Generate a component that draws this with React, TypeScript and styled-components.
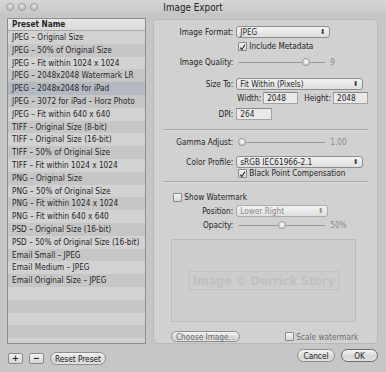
import * as React from "react";
import styled, { createGlobalStyle } from "styled-components";

const presets = [
  "JPEG – Original Size",
  "JPEG – 50% of Original Size",
  "JPEG – Fit within 1024 x 1024",
  "JPEG – 2048x2048 Watermark LR",
  "JPEG – 2048x2048 for iPad",
  "JPEG – 3072 for iPad – Horz Photo",
  "JPEG – Fit within 640 x 640",
  "TIFF – Original Size (8-bit)",
  "TIFF – Original Size (16-bit)",
  "TIFF – 50% of Original Size",
  "TIFF – Fit within 1024 x 1024",
  "PNG – Original Size",
  "PNG – 50% of Original Size",
  "PNG – Fit within 1024 x 1024",
  "PNG – Fit within 640 x 640",
  "PSD – Original Size (16-bit)",
  "PSD – 50% of Original Size (16-bit)",
  "Email Small – JPEG",
  "Email Medium – JPEG",
  "Email Original Size – JPEG",
];

const SELECTED = 4;
const STRIPES = 25;

const App: React.FC = () => {
  const rows = React.useMemo(
    () =>
      Array.from({ length: STRIPES }, (_, i) => (
        <ListRow key={i} $odd={i % 2 === 1} $selected={i === SELECTED}>
          {presets[i] ?? ""}
        </ListRow>
      )),
    []
  );

  return (
    <>
      <GlobalStyle />
      <Window>
        <TitleBar>
          <Lights>
            <Light />
            <Light />
            <Light />
          </Lights>
          <Title>Image Export</Title>
          <span />
        </TitleBar>
        <Body>
          <LeftColumn>
            <List>
              <ListHeader>Preset Name</ListHeader>
              {rows}
            </List>
            <ButtonRow>
              <SquareButton>+</SquareButton>
              <SquareButton>−</SquareButton>
              <PillButton $width={56}>Reset Preset</PillButton>
            </ButtonRow>
          </LeftColumn>
          <RightColumn>
            <Panel>
              <FormRow $top={6} $height={12}>
                <Label>Image Format:</Label>
                <Select $width={94}>JPEG</Select>
              </FormRow>
              <FormRow $top={3} $height={10}>
                <span />
                <Check checked>Include Metadata</Check>
              </FormRow>
              <FormRow $top={6} $height={10}>
                <Label>Image Quality:</Label>
                <Slider value={0.78} text="9" />
              </FormRow>
              <FormRow $top={11} $height={12}>
                <Label>Size To:</Label>
                <Select $width={127}>Fit Within (Pixels)</Select>
              </FormRow>
              <FormRow $top={2} $height={12}>
                <span />
                <SizeFields>
                  <Label>Width:</Label>
                  <Field $width={35}>2048</Field>
                  <Label>Height:</Label>
                  <Field $width={35}>2048</Field>
                </SizeFields>
              </FormRow>
              <FormRow $top={4} $height={12}>
                <Label>DPI:</Label>
                <Field $width={36}>264</Field>
              </FormRow>
              <Separator $top={9} />
              <FormRow $top={6} $height={10}>
                <Label>Gamma Adjust:</Label>
                <Slider value={0.04} text="1.00" />
              </FormRow>
              <FormRow $top={9} $height={12}>
                <Label>Color Profile:</Label>
                <Select $width={127}>sRGB IEC61966-2.1</Select>
              </FormRow>
              <FormRow $top={0} $height={10}>
                <span />
                <Check checked>Black Point Compensation</Check>
              </FormRow>
              <Separator $top={3} />
              <WatermarkToggle>
                <Check>Show Watermark</Check>
              </WatermarkToggle>
              <FormRow $top={3} $height={12}>
                <Label>Position:</Label>
                <Select $width={92} $disabled>
                  Lower Right
                </Select>
              </FormRow>
              <FormRow $top={3} $height={10}>
                <Label>Opacity:</Label>
                <Slider value={0.5} text="50%" />
              </FormRow>
              <PreviewBox>
                <WatermarkText>Image © Derrick Story</WatermarkText>
              </PreviewBox>
              <PanelFooter>
                <PillButton $width={69} $disabled>
                  Choose Image...
                </PillButton>
                <Check $disabled>Scale watermark</Check>
              </PanelFooter>
            </Panel>
            <DialogButtons>
              <PillButton $width={38}>Cancel</PillButton>
              <PillButton $width={37} $default>
                OK
              </PillButton>
            </DialogButtons>
          </RightColumn>
        </Body>
      </Window>
    </>
  );
};

const Check: React.FC<{
  checked?: boolean;
  $disabled?: boolean;
  children: React.ReactNode;
}> = ({ checked, $disabled, children }) => (
  <CheckWrap $disabled={$disabled}>
    <CheckBox>
      {checked && (
        <svg width="9" height="9" viewBox="0 0 9 9">
          <path
            d="M1.6 4.6 L3.6 7.2 L7.8 0.6"
            fill="none"
            stroke="#2a2a2a"
            strokeWidth="1.4"
          />
        </svg>
      )}
    </CheckBox>
    {children}
  </CheckWrap>
);

const Slider: React.FC<{ value: number; text: string }> = ({ value, text }) => (
  <SliderWrap>
    <Track>
      <Knob style={{ left: `${value * 100}%` }} />
    </Track>
    <SliderValue>{text}</SliderValue>
  </SliderWrap>
);

const GlobalStyle = createGlobalStyle`
  body {
    margin: 0;
    background: #c6c6c6;
    font-family: "DejaVu Sans Condensed", "DejaVu Sans", sans-serif;
    font-stretch: condensed;
    font-size: 8.2px;
    color: #262626;
  }
`;

const Window = styled.div`
  width: 386px;
  height: 372px;
  display: flex;
  flex-direction: column;
  background: #c6c6c6;
  overflow: hidden;
`;

const TitleBar = styled.div`
  height: 13px;
  display: grid;
  grid-template-columns: 1fr auto 1fr;
  align-items: center;
  background: linear-gradient(#d6d6d6, #c9c9c9);
`;

const Lights = styled.div`
  display: flex;
  gap: 4px;
  padding-left: 6px;
`;

const Light = styled.span`
  width: 8px;
  height: 8px;
  border-radius: 50%;
  box-sizing: border-box;
  border: 1px solid #9d9d9d;
  background: radial-gradient(circle at 50% 30%, #e6e6e6, #b4b4b4);
`;

const Title = styled.div`
  font-family: "DejaVu Sans", sans-serif;
  font-size: 9.8px;
  color: #222;
  padding-top: 1px;
`;

const Body = styled.div`
  flex: 1;
  display: flex;
  padding: 5px 8px 0 7px;
  gap: 7px;
`;

const LeftColumn = styled.div`
  width: 145px;
  display: flex;
  flex-direction: column;
`;

const List = styled.div`
  height: 326px;
  box-sizing: border-box;
  border: 1px solid #8f8f8f;
  overflow: hidden;
  background: #cfcfcf;
`;

const ListHeader = styled.div`
  height: 11px;
  line-height: 11px;
  padding-left: 4px;
  font-weight: bold;
  background: linear-gradient(#e6e6e6, #d9d9d9);
  border-bottom: 1px solid #a8a8a8;
`;

const ListRow = styled.div<{ $odd: boolean; $selected: boolean }>`
  height: 12.8px;
  line-height: 12.8px;
  padding-left: 4px;
  white-space: nowrap;
  background: ${(p) => (p.$selected ? "#b3b9c2" : p.$odd ? "#c6c6c6" : "#d2d2d2")};
`;

const ButtonRow = styled.div`
  display: flex;
  gap: 6px;
  margin-top: 8px;
  padding-left: 1px;
  align-items: center;
`;

const SquareButton = styled.div`
  width: 15px;
  height: 11px;
  box-sizing: border-box;
  border: 1px solid #8c8c8c;
  border-radius: 2px;
  background: linear-gradient(#f2f2f2, #d4d4d4);
  display: flex;
  align-items: center;
  justify-content: center;
  font-weight: bold;
  font-size: 9px;
  line-height: 1;
`;

const PillButton = styled.div<{ $width: number; $disabled?: boolean; $default?: boolean }>`
  width: ${(p) => p.$width}px;
  height: ${(p) => (p.$disabled ? 11 : 13)}px;
  box-sizing: border-box;
  border: 1px solid ${(p) => (p.$default ? "#6c6c6c" : "#8e8e8e")};
  border-radius: 7px;
  background: linear-gradient(#f4f4f4, #d6d6d6 60%, #e2e2e2);
  display: flex;
  align-items: center;
  justify-content: center;
  white-space: nowrap;
  color: ${(p) => (p.$disabled ? "#6c6c6c" : "#1e1e1e")};
`;

const RightColumn = styled.div`
  flex: 1;
  display: flex;
  flex-direction: column;
  padding-top: 1px;
`;

const Panel = styled.div`
  height: 325px;
  box-sizing: border-box;
  border: 1px solid #b9b9b9;
  border-radius: 4px;
  background: #d1d1d1;
  padding: 0 9px 0 0;
  display: flex;
  flex-direction: column;
`;

const FormRow = styled.div<{ $top: number; $height: number }>`
  display: grid;
  grid-template-columns: 79px 1fr;
  column-gap: 3px;
  align-items: center;
  margin-top: ${(p) => p.$top}px;
  height: ${(p) => p.$height}px;
`;

const Label = styled.span`
  text-align: right;
  white-space: nowrap;
`;

const Select = styled.div<{ $width: number; $disabled?: boolean }>`
  width: ${(p) => p.$width}px;
  height: 12px;
  box-sizing: border-box;
  border: 1px solid ${(p) => (p.$disabled ? "#ababab" : "#8e8e8e")};
  border-radius: 3px;
  background: linear-gradient(#f3f3f3, #dedede);
  display: flex;
  align-items: center;
  justify-content: space-between;
  padding: 0 4px 0 3px;
  color: ${(p) => (p.$disabled ? "#8a8a8a" : "#1e1e1e")};

  &::after {
    content: "⬍";
    font-size: 7px;
    color: ${(p) => (p.$disabled ? "#8a8a8a" : "#333")};
  }
`;

const CheckWrap = styled.label<{ $disabled?: boolean }>`
  display: flex;
  align-items: center;
  gap: 2px;
  padding-left: 2px;
  white-space: nowrap;
  color: ${(p) => (p.$disabled ? "#6e6e6e" : "#262626")};
`;

const CheckBox = styled.span`
  width: 9px;
  height: 9px;
  box-sizing: border-box;
  border: 1px solid #8a8a8a;
  border-radius: 1px;
  background: linear-gradient(#f4f4f4, #d8d8d8);
  display: flex;
  overflow: visible;
`;

const SliderWrap = styled.div`
  display: flex;
  align-items: center;
  gap: 5px;
  padding-left: 2px;
`;

const Track = styled.div`
  position: relative;
  width: 87px;
  height: 1px;
  background: #9c9c9c;
`;

const Knob = styled.span`
  position: absolute;
  top: -4px;
  width: 8px;
  height: 8px;
  margin-left: -4px;
  box-sizing: border-box;
  border-radius: 50%;
  border: 1px solid #9a9a9a;
  background: radial-gradient(circle at 50% 35%, #fafafa, #cfcfcf);
`;

const SliderValue = styled.span`
  color: #8a8a8a;
`;

const SizeFields = styled.div`
  display: flex;
  align-items: center;
  gap: 2px;
  padding-left: 1px;

  & > *:nth-child(3) {
    margin-left: 4px;
  }
`;

const Field = styled.div<{ $width: number }>`
  width: ${(p) => p.$width}px;
  height: 12px;
  box-sizing: border-box;
  border: 1px solid #a3a3a3;
  border-top-color: #8a8a8a;
  background: #e9e9e9;
  padding-left: 3px;
  line-height: 10px;
`;

const Separator = styled.div<{ $top: number }>`
  margin: ${(p) => p.$top}px 0 0 9px;
  height: 1px;
  background: #a9a9a9;
  border-bottom: 1px solid #dcdcdc;
`;

const WatermarkToggle = styled.div`
  margin: 9px 0 0 17px;
  height: 10px;
  display: flex;
  align-items: center;
`;

const PreviewBox = styled.div`
  margin: 9px 0 0 17px;
  width: 185px;
  height: 83px;
  box-sizing: border-box;
  border: 1px solid #bcbcbc;
  background: #cdcdcd;
  display: flex;
  align-items: center;
  justify-content: center;
`;

const WatermarkText = styled.div`
  font-family: "DejaVu Sans", sans-serif;
  font-weight: bold;
  font-size: 12.5px;
  color: #c1c1c1;
  border: 1px solid #c1c1c1;
  padding: 1px 3px;
  white-space: nowrap;
`;

const PanelFooter = styled.div`
  margin: 9px 0 0 17px;
  width: 187px;
  display: flex;
  align-items: center;
  justify-content: space-between;
`;

const DialogButtons = styled.div`
  display: flex;
  justify-content: flex-end;
  gap: 6px;
  margin-top: 5px;
`;

export default App;
